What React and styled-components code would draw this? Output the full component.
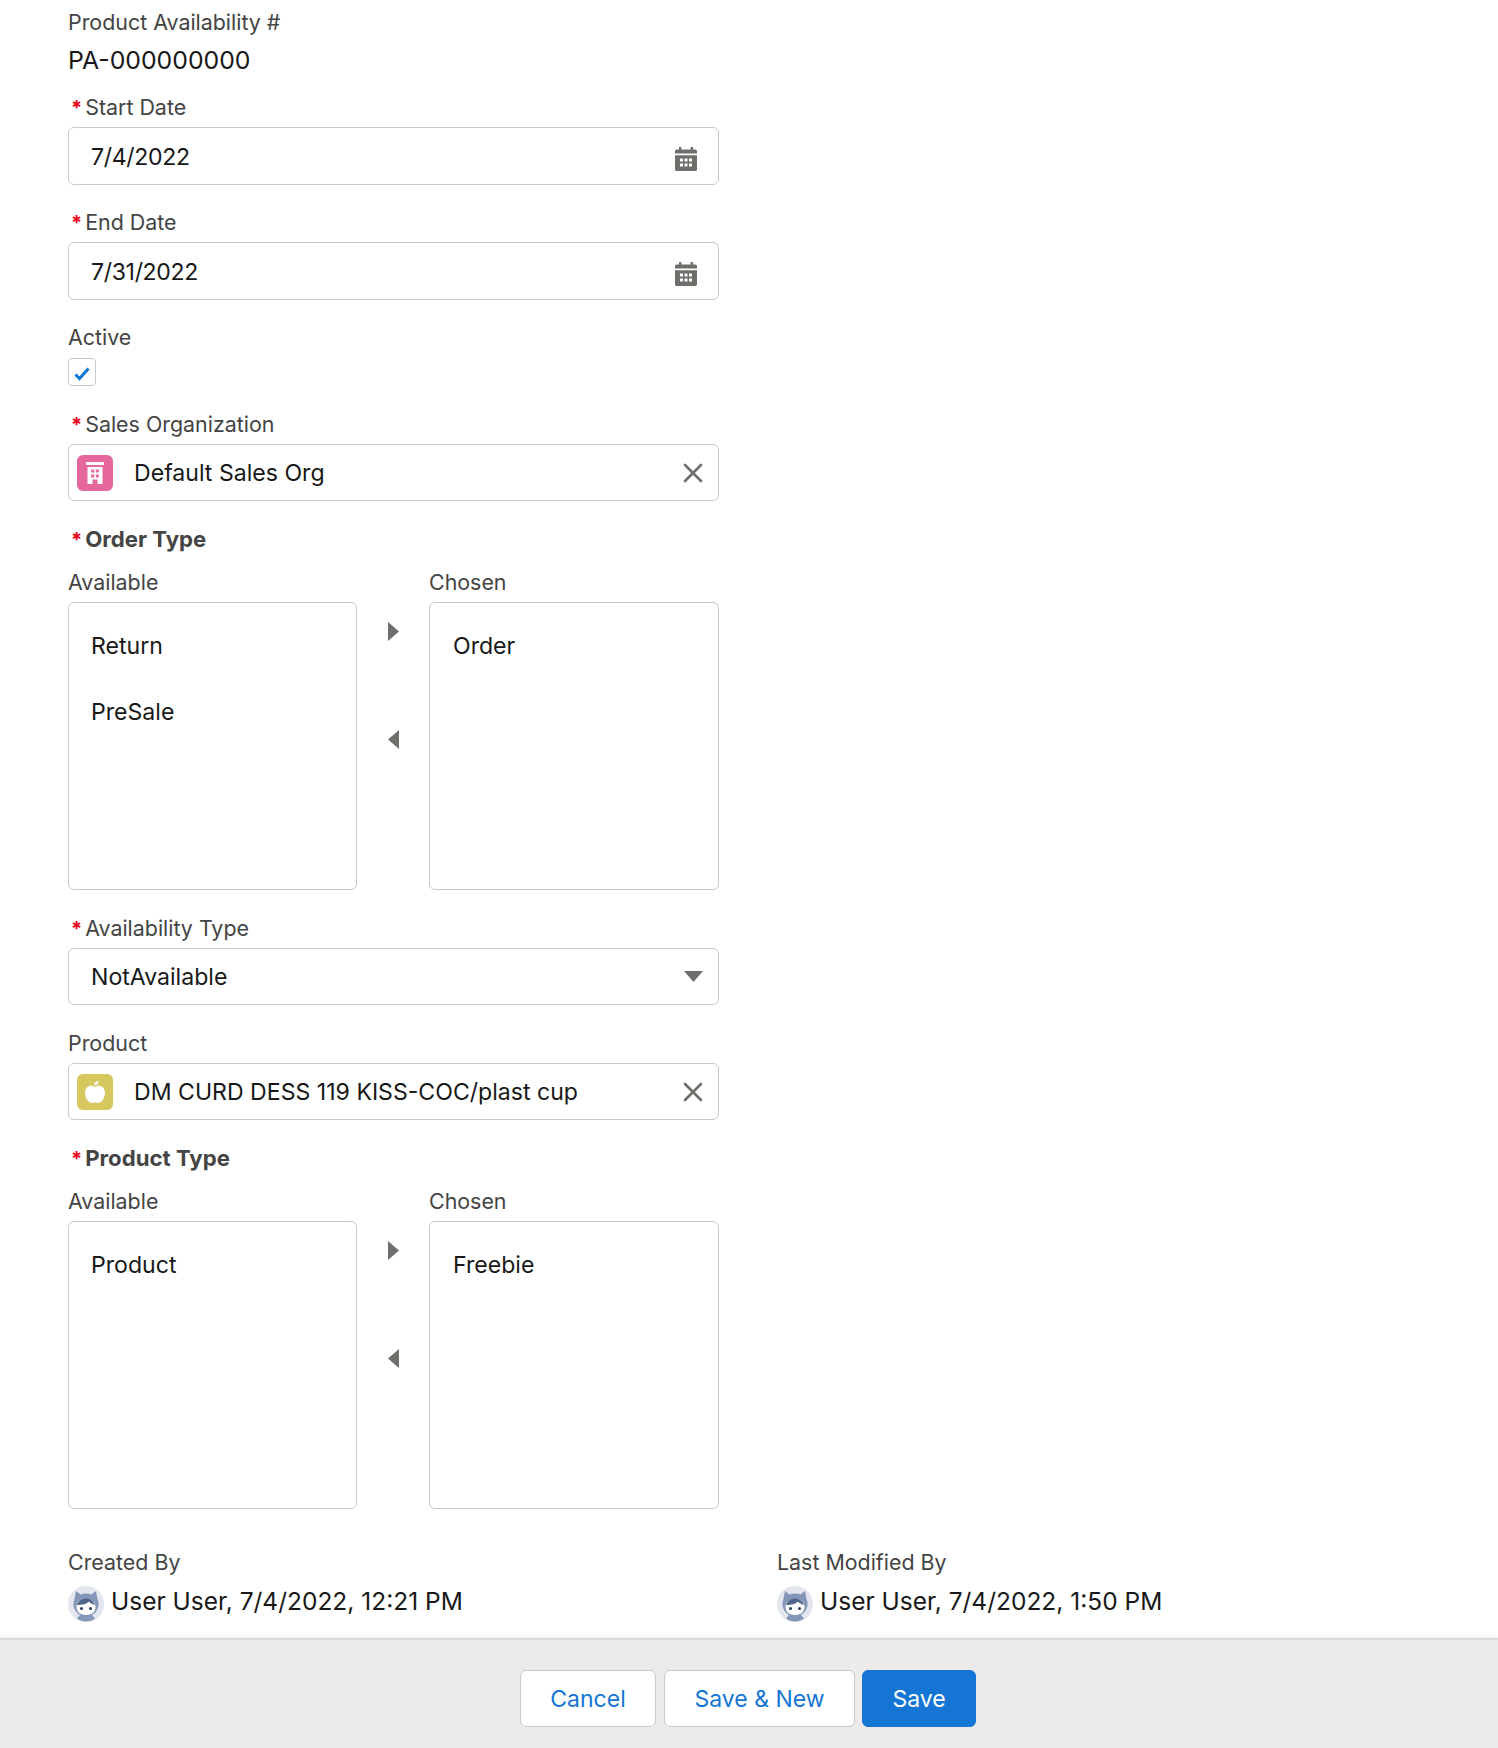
import React from "react";
import styled, { createGlobalStyle } from "styled-components";

const Global = createGlobalStyle`
  html, body { margin: 0; padding: 0; background: #fff; }
  body { font-family: Inter, "Liberation Sans", Arial, sans-serif; }
`;

const Page = styled.div`
  width: 1498px;
  height: 1748px;
  display: flex;
  flex-direction: column;
  overflow: hidden;
  background: #fff;
`;

const Form = styled.main`
  flex: 1;
  padding: 8px 0 0 68px;
  display: flex;
  flex-direction: column;
`;

const Field = styled.div`
  width: 651px;
  margin-top: ${(p) => p.$top || 0}px;
`;

const Label = styled.div`
  height: 28px;
  line-height: 28.500px;
  font-size: ${(p) => (p.$bold ? 22.2 : 21.4)}px;
  color: #444444;
  white-space: nowrap;
  margin-bottom: ${(p) => (p.$gap === undefined ? 6 : p.$gap)}px;
  padding-left: ${(p) => (p.$required ? 3 : 0)}px;
  font-weight: ${(p) => (p.$bold ? 700 : 400)};
`;

const Star = styled.span`
  color: #ea001e;
  margin-right: 3px;
  font-weight: 700;
  font-size: 20px;
`;

const Value = styled.div`
  height: 32px;
  line-height: 33px;
  font-size: 24.8px;
  color: #181818;
  margin-top: 8px;
`;

const Control = styled.div`
  box-sizing: border-box;
  width: 651px;
  height: ${(p) => p.$h || 58}px;
  border: 1px solid #c9c9c9;
  border-radius: 6px;
  background: #fff;
  display: flex;
  align-items: center;
  padding: 0 ${(p) => p.$right || 16}px 0 ${(p) => p.$left || 22}px;
  font-size: 23.1px;
  color: #181818;
`;

const ControlText = styled.span`
  flex: 1;
  white-space: nowrap;
`;

const DateText = styled(ControlText)`
  padding-top: 2px;
  letter-spacing: -0.35px;
`;

const Check = styled.div`
  box-sizing: border-box;
  width: 28px;
  height: 28px;
  border: 1px solid #c9c9c9;
  border-radius: 4px;
  padding-top: 3px;
  display: flex;
  align-items: center;
  justify-content: center;
`;

const LookupIcon = styled.div`
  width: 36px;
  height: 36px;
  border-radius: 6px;
  background: ${(p) => p.$bg};
  display: flex;
  align-items: center;
  justify-content: center;
  margin-right: 21px;
  flex: none;
`;

const Duel = styled.div`
  display: grid;
  grid-template-columns: 289px 72px 290px;
`;

const ListBox = styled.div`
  box-sizing: border-box;
  height: 288px;
  border: 1px solid #c9c9c9;
  border-radius: 6px;
  padding: 10px 0 0 ${(p) => p.$left || 22}px;
`;

const Option = styled.div`
  height: 66px;
  line-height: 66px;
  font-size: 23.1px;
  color: #181818;
`;

const Mover = styled.div`
  padding-top: 54px;
  display: flex;
  flex-direction: column;
  align-items: center;
  gap: 89px;
`;

const Audit = styled.div`
  display: grid;
  grid-template-columns: 709px 1fr;
  margin-top: 39px;
`;

const AuditValue = styled.div`
  display: flex;
  align-items: flex-start;
  gap: 7px;
  margin-top: 8px;
  font-size: 24.5px;
  line-height: 34px;
  color: #181818;
  white-space: nowrap;
`;

const AvatarSlot = styled.div`
  width: 36px;
  height: 36px;
  margin-top: 2px;
  flex: none;
`;

const Footer = styled.footer`
  box-sizing: border-box;
  height: 110px;
  background: #ecebea;
  border-top: 2px solid #dddbda;
  box-shadow: 0 -2px 3px rgba(0, 0, 0, 0.06);
  display: flex;
  justify-content: center;
  padding: 30px 2px 0 0;
  gap: 8px;
`;

const Button = styled.button`
  box-sizing: border-box;
  height: 57px;
  width: ${(p) => p.$w}px;
  padding: 0;
  margin-left: ${(p) => (p.$brand ? -1 : 0)}px;
  border-radius: 6px;
  border: 1px solid ${(p) => (p.$brand ? "#1475d4" : "#c9c9c9")};
  background: ${(p) => (p.$brand ? "#1475d4" : "#fff")};
  color: ${(p) => (p.$brand ? "#fff" : "#1475d4")};
  font-family: inherit;
  font-size: 23px;
  font-weight: 400;
`;

const Calendar = () => (
  <svg width="22" height="24" viewBox="0 0 22 24" style={{ marginTop: 5, flex: "none" }}>
    <path fill="#706e6b" d="M4 0h2.400v2.400h9.200V0H18v2.400h2.200c1 0 1.800.8 1.800 1.800v2.300H0V4.200C0 3.200.8 2.400 1.800 2.400H4z" />
    <path fill="#706e6b" fillRule="evenodd" d="M0 8.200h22v14c0 1-.8 1.800-1.800 1.800H1.800C.8 24 0 23.200 0 22.200zM5 11.500v3h3v-3zm4.500 0v3h3v-3zm4.500 0v3h3v-3zM5 16.500v3h3v-3zm4.500 0v3h3v-3zm4.500 0v3h3v-3z" />
  </svg>
);

const Clear = () => (
  <svg width="20" height="20" viewBox="0 0 20 20" style={{ flex: "none" }}>
    <path stroke="#706e6b" strokeWidth="2.600" strokeLinecap="round" d="M2 2l16 16M18 2L2 18" />
  </svg>
);

const Building = () => (
  <svg width="18" height="22" viewBox="0 0 18 22">
    <path fill="#fff" d="M0 0h18v3H0z" />
    <path fill="#fff" fillRule="evenodd" d="M1.500 5h15v17h-5v-4.500h-5V22h-5zM5.200 7.500v3h3v-3zm4.600 0v3h3v-3zm-4.600 5v3h3v-3zm4.600 0v3h3v-3z" />
  </svg>
);

const Apple = () => (
  <svg width="20" height="22" viewBox="0 0 20 22">
    <path fill="#fff" d="M10 6c1.800-1.300 4.300-1.500 6.300-.7C18.800 6.400 20 9 20 12c0 4.700-3.300 10-7 10-1.300 0-2-.5-3-.5s-1.700.5-3 .5c-3.700 0-7-5.300-7-10 0-3 1.200-5.600 3.700-6.700C5.700 4.500 8.200 4.700 10 6z" />
    <path fill="#fff" d="M9.300 4.500C9 2.300 10.300.400 13.300 0c.3 2.500-1 4.400-4 4.500z" />
  </svg>
);

const Tick = () => (
  <svg width="16" height="14" viewBox="0 0 16 14">
    <path fill="none" stroke="#0f76d8" strokeWidth="3" d="M1.500 7.500l4 4L14.500 1.500" />
  </svg>
);

const Caret = () => (
  <svg width="19" height="11" viewBox="0 0 19 11" style={{ flex: "none" }}>
    <path fill="#706e6b" d="M0 0h19L9.500 11z" />
  </svg>
);

const Arrow = ({ dir }) => (
  <svg width="11" height="19" viewBox="0 0 11 19">
    <path fill="#706e6b" d={dir === "right" ? "M0 0l11 9.500L0 19z" : "M11 0L0 9.500 11 19z"} />
  </svg>
);

const Avatar = () => (
  <svg width="36" height="36" viewBox="0 0 36 36">
    <circle cx="18" cy="18" r="18" fill="#e3e6ee" />
    <path fill="#8497b8" d="M8 5l4.500 3.500c3.500-1.200 7.500-1.200 11 0L28 5l1.500 8c1.500 3 1.500 7 0 10-1.200 3-3.500 5-5.500 6l3 3.500c-2.500 2-5.500 3-9 3s-6.500-1-9-3l3-3.500c-2-1-4.300-3-5.500-6-1.500-3-1.500-7 0-10z" />
    <path fill="#fff" d="M8.500 21c0-5 4-8 9.500-8s9.500 3 9.500 8-4 8-9.500 8-9.500-3-9.500-8z" />
    <path fill="#4f6489" d="M9 19c1.500-4.500 5.500-6.500 9-6.500 4 0 7.700 2.500 9 6.500-3-.8-4.800-1.800-6-3.500-2 2.500-7 3.500-12 3.500z" />
    <circle cx="13.500" cy="22.500" r="1.500" fill="#27395c" />
    <circle cx="22.500" cy="22.500" r="1.500" fill="#27395c" />
  </svg>
);

const Required = ({ children, bold, gap }) => (
  <Label $required $bold={bold} $gap={gap}>
    <Star>*</Star>
    {children}
  </Label>
);

const DualList = ({ available, chosen }) => (
  <Duel>
    <div>
      <Label>Available</Label>
      <ListBox>
        {available.map((o) => (
          <Option key={o}>{o}</Option>
        ))}
      </ListBox>
    </div>
    <Mover>
      <Arrow dir="right" />
      <Arrow dir="left" />
    </Mover>
    <div>
      <Label>Chosen</Label>
      <ListBox $left={23}>
        {chosen.map((o) => (
          <Option key={o}>{o}</Option>
        ))}
      </ListBox>
    </div>
  </Duel>
);

export default function App() {
  return (
    <Page>
      <Global />
      <Form>
        <Field>
          <Label $gap={0}>Product Availability #</Label>
          <Value>PA-000000000</Value>
        </Field>
        <Field $top={17}>
          <Required>Start Date</Required>
          <Control $right={21}>
            <DateText>7/4/2022</DateText>
            <Calendar />
          </Control>
        </Field>
        <Field $top={23}>
          <Required>End Date</Required>
          <Control $right={21}>
            <DateText>7/31/2022</DateText>
            <Calendar />
          </Control>
        </Field>
        <Field $top={23}>
          <Label $gap={7}>Active</Label>
          <Check>
            <Tick />
          </Check>
        </Field>
        <Field $top={24}>
          <Required>Sales Organization</Required>
          <Control $h={57} $left={8} $right={15}>
            <LookupIcon $bg="#e5679b">
              <Building />
            </LookupIcon>
            <ControlText>Default Sales Org</ControlText>
            <Clear />
          </Control>
        </Field>
        <Field $top={24}>
          <Required bold gap={15}>Order Type</Required>
          <DualList available={["Return", "PreSale"]} chosen={["Order"]} />
        </Field>
        <Field $top={24}>
          <Required>Availability Type</Required>
          <Control $h={57} $right={15}>
            <ControlText>NotAvailable</ControlText>
            <Caret />
          </Control>
        </Field>
        <Field $top={24}>
          <Label>Product</Label>
          <Control $h={57} $left={8} $right={15}>
            <LookupIcon $bg="#d6c75f">
              <Apple />
            </LookupIcon>
            <ControlText>DM CURD DESS 119 KISS-COC/plast cup</ControlText>
            <Clear />
          </Control>
        </Field>
        <Field $top={24}>
          <Required bold gap={15}>Product Type</Required>
          <DualList available={["Product"]} chosen={["Freebie"]} />
        </Field>
        <Audit>
          <div>
            <Label $gap={0}>Created By</Label>
            <AuditValue>
              <AvatarSlot>
                <Avatar />
              </AvatarSlot>
              User User, 7/4/2022, 12:21 PM
            </AuditValue>
          </div>
          <div>
            <Label $gap={0}>Last Modified By</Label>
            <AuditValue>
              <AvatarSlot>
                <Avatar />
              </AvatarSlot>
              User User, 7/4/2022, 1:50 PM
            </AuditValue>
          </div>
        </Audit>
      </Form>
      <Footer>
        <Button $w={136}>Cancel</Button>
        <Button $w={191}>Save &amp; New</Button>
        <Button $w={114} $brand>Save</Button>
      </Footer>
    </Page>
  );
}
